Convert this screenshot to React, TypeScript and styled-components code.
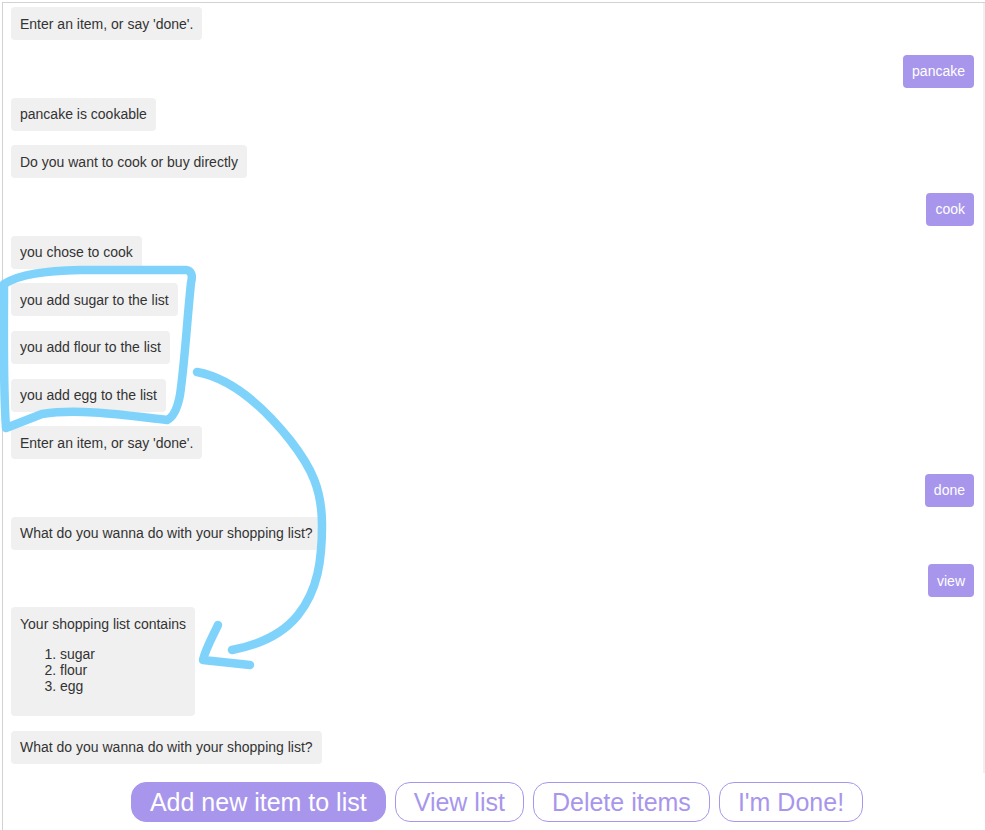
import * as React from 'react'
import styled, { createGlobalStyle } from 'styled-components'

const GlobalStyle = createGlobalStyle`
  html, body {
    margin: 0;
    padding: 0;
    background: #ffffff;
  }
  body {
    font-family: "Liberation Sans", Arial, sans-serif;
    overflow: hidden;
  }
`

const Stage = styled.div`
  position: relative;
  width: 985px;
  height: 830px;
  overflow: hidden;
`

const Frame = styled.div`
  margin: 2px 0 0 2px;
  border-top: 1px solid #d2d2d2;
  border-left: 1px solid #d2d2d2;
  height: 827px;
  width: 982px;
`

const ChatLog = styled.div`
  box-sizing: border-box;
  height: 770px;
  padding: 4px 9px 0 8px;
  border-right: 2px solid #f0f0f0;
  overflow: hidden;
  display: flex;
  flex-direction: column;
`

const Row = styled.div<{ $user?: boolean }>`
  display: flex;
  justify-content: ${(p) => (p.$user ? 'flex-end' : 'flex-start')};
  margin-bottom: ${(p) => (p.$user ? '10px' : '14.6px')};
`

const Bubble = styled.div<{ $user?: boolean }>`
  padding: 8.5px 9px;
  border-radius: 4px;
  font-size: 14px;
  line-height: 16px;
  background: ${(p) => (p.$user ? '#a896ec' : '#f0f0f0')};
  color: ${(p) => (p.$user ? '#ffffff' : '#333333')};
`

const ItemList = styled.ol`
  margin: 14px 0;
  padding-left: 40px;
`

const ButtonBar = styled.div`
  display: flex;
  justify-content: center;
  gap: 9px;
  padding: 9px 0 0 6px;
`

const Choice = styled.button<{ $primary?: boolean }>`
  height: 40px;
  padding: 0 18px;
  border-radius: 15px;
  border: 1px solid #a896ec;
  background: ${(p) => (p.$primary ? '#a896ec' : '#ffffff')};
  color: ${(p) => (p.$primary ? '#ffffff' : '#a896ec')};
  font-family: "Liberation Sans", Arial, sans-serif;
  font-size: 25px;
  cursor: pointer;
  outline: none;
`

const Scribble = styled.svg`
  position: absolute;
  top: 0;
  left: 0;
  pointer-events: none;
`

type Msg = { user?: boolean; text: string }

const messages: Msg[] = [
  { text: "Enter an item, or say 'done'." },
  { user: true, text: 'pancake' },
  { text: 'pancake is cookable' },
  { text: 'Do you want to cook or buy directly' },
  { user: true, text: 'cook' },
  { text: 'you chose to cook' },
  { text: 'you add sugar to the list' },
  { text: 'you add flour to the list' },
  { text: 'you add egg to the list' },
  { text: "Enter an item, or say 'done'." },
  { user: true, text: 'done' },
  { text: 'What do you wanna do with your shopping list?' },
  { user: true, text: 'view' },
]

export default function App() {
  return (
    <Stage>
      <GlobalStyle />
      <Frame>
        <ChatLog>
          {messages.map((m, i) => (
            <Row key={i} $user={m.user}>
              <Bubble $user={m.user}>{m.text}</Bubble>
            </Row>
          ))}
          <Row>
            <Bubble>
              Your shopping list contains
              <ItemList>
                <li>sugar</li>
                <li>flour</li>
                <li>egg</li>
              </ItemList>
            </Bubble>
          </Row>
          <Row>
            <Bubble>What do you wanna do with your shopping list?</Bubble>
          </Row>
        </ChatLog>
        <ButtonBar>
          <Choice $primary>Add new item to list</Choice>
          <Choice>View list</Choice>
          <Choice>Delete items</Choice>
          <Choice>I'm Done!</Choice>
        </ButtonBar>
      </Frame>
      <Scribble width="985" height="830" viewBox="0 0 985 830">
        <g fill="none" stroke="#7fd3fb" strokeWidth="8.5" strokeLinecap="round" strokeLinejoin="round">
          <path d="M 4 284 C 20 274, 45 271, 80 270 L 186 270 Q 194 271 191 283 C 187 320, 185 360, 180 395 Q 176 416 167 420 C 130 416, 80 408, 42 414 L 6 428 C 3 385, 4 330, 4 284" />
          <path d="M 197 372 C 230 378, 262 405, 290 440 C 312 468, 322 490, 322 525 C 322 560, 318 590, 298 615 C 282 635, 258 645, 232 650" />
          <path d="M 218 625 C 212 638, 206 648, 203 660 L 250 665" />
        </g>
      </Scribble>
    </Stage>
  )
}
